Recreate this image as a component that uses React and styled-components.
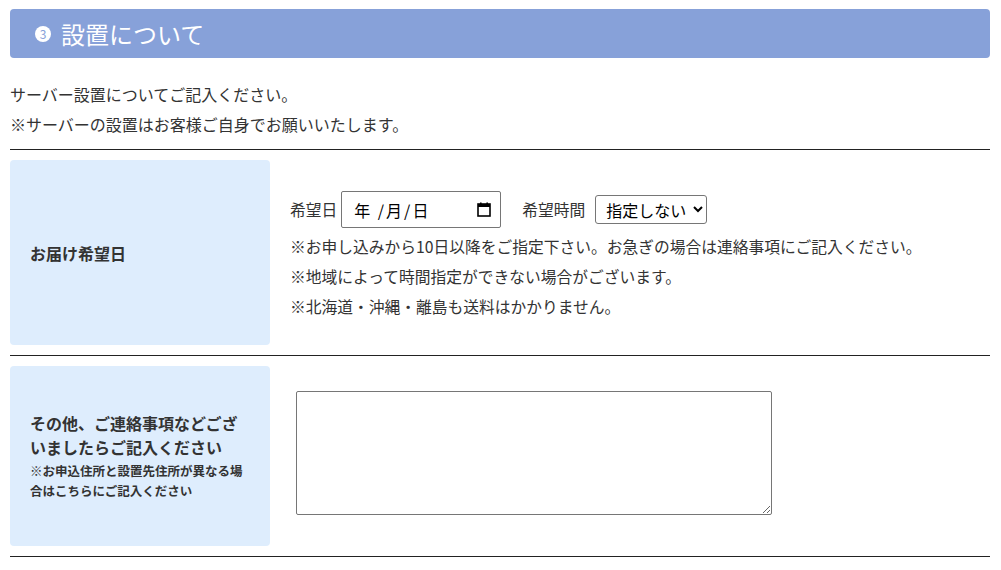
import React from 'react';
import styled, { createGlobalStyle } from 'styled-components';

const GlobalStyle = createGlobalStyle`
    body {
        margin: 0;
        background: #fff;
        color: #333;
        font-family: "Noto Sans CJK JP", "Noto Sans", sans-serif;
    }
`;

const Page = styled.div`
    padding: 9px 11px 0 10px;
`;

const Heading = styled.h2`
    display: flex;
    align-items: center;
    gap: 10px;
    height: 49px;
    margin: 0;
    padding: 0 0 0 25px;
    border-radius: 4px;
    background-color: #87a1d9;
    color: #fff;
    font-size: 24px;
    font-weight: 400;
`;

const Num = styled.span`
    display: inline-flex;
    align-items: center;
    justify-content: center;
    width: 16px;
    height: 16px;
    border-radius: 50%;
    background: #fff;
    color: #87a1d9;
    font-size: 12px;
    font-weight: 400;
    line-height: 1;
`;

const Intro = styled.div`
    padding: 21px 0 10px;
    border-bottom: 1px solid #222;

    p {
        margin: 0;
        font-size: 16px;
        line-height: 30px;
    }
`;

const Row = styled.div`
    display: grid;
    grid-template-columns: 260px 1fr;
    column-gap: 20px;
    padding: 10px 0;
    border-bottom: 1px solid #222;
`;

const Label = styled.div`
    display: flex;
    flex-direction: column;
    justify-content: center;
    height: ${({h}) => h}px;
    padding: 0 20px;
    border-radius: 4px;
    background: #deedfd;
    box-sizing: border-box;

    strong {
        font-size: 16px;
        line-height: 24px;
    }

    small {
        margin-top: 2px;
        font-size: 12.5px;
        font-weight: 700;
        line-height: 20px;
    }
`;

const Content = styled.div`
    display: flex;
    flex-direction: column;
    align-items: flex-start;
    padding-top: ${({top}) => top}px;
`;

const Fields = styled.div`
    display: flex;
    align-items: center;
    margin-bottom: 4px;
`;

const FieldName = styled.span`
    font-size: 15.75px;
    margin: 0 ${({right}) => right}px 0 ${({left}) => left}px;
`;

const DateBox = styled.div`
    display: flex;
    align-items: center;
    justify-content: space-between;
    width: 160px;
    height: 37px;
    box-sizing: border-box;
    padding: 0 9px 0 12px;
    border: 1px solid #767676;
    border-radius: 2px;
    font-size: 16px;
    letter-spacing: 2px;
    color: #000;
`;

const Select = styled.select`
    height: 29px;
    width: 112px;
    padding: 0 2px 0 6px;
    border: 1px solid #767676;
    border-radius: 3px;
    background: #fff;
    font-family: inherit;
    font-size: 16px;
    color: #000;
`;

const Note = styled.p`
    margin: 0;
    font-size: 15.75px;
    line-height: 30px;
`;

const TextArea = styled.textarea`
    width: 476px;
    height: 124px;
    margin-left: 6px;
    box-sizing: border-box;
    border: 1px solid #767676;
    border-radius: 2px;
    resize: both;
`;

function CalendarIcon() {
    return (
        <svg width="14" height="15" viewBox="0 0 14 15">
            <rect x="1" y="2" width="12" height="12" fill="none" stroke="#000" strokeWidth="1.6" />
            <rect x="1" y="2" width="12" height="3" fill="#000" />
            <rect x="3" y="0.5" width="1.6" height="2.5" fill="#000" />
            <rect x="9.4" y="0.5" width="1.6" height="2.5" fill="#000" />
        </svg>
    );
}

export default function App() {
    return (
        <Page>
            <GlobalStyle />
            <Heading><Num>3</Num>設置について</Heading>
            <Intro>
                <p>サーバー設置についてご記入ください。</p>
                <p>※サーバーの設置はお客様ご自身でお願いいたします。</p>
            </Intro>
            <Row>
                <Label h={185}><strong>お届け希望日</strong></Label>
                <Content top={31}>
                    <Fields>
                        <FieldName left={0} right={4}>希望日</FieldName>
                        <DateBox>
                            <span>年 /月/日</span>
                            <CalendarIcon />
                        </DateBox>
                        <FieldName left={21} right={10}>希望時間</FieldName>
                        <Select defaultValue="none">
                            <option value="none">指定しない</option>
                            <option value="am">午前中</option>
                        </Select>
                    </Fields>
                    <Note>※お申し込みから10日以降をご指定下さい。お急ぎの場合は連絡事項にご記入ください。</Note>
                    <Note>※地域によって時間指定ができない場合がございます。</Note>
                    <Note>※北海道・沖縄・離島も送料はかかりません。</Note>
                </Content>
            </Row>
            <Row>
                <Label h={180}>
                    <strong>その他、ご連絡事項などございましたらご記入ください</strong>
                    <small>※お申込住所と設置先住所が異なる場合はこちらにご記入ください</small>
                </Label>
                <Content top={25}>
                    <TextArea />
                </Content>
            </Row>
        </Page>
    );
}
